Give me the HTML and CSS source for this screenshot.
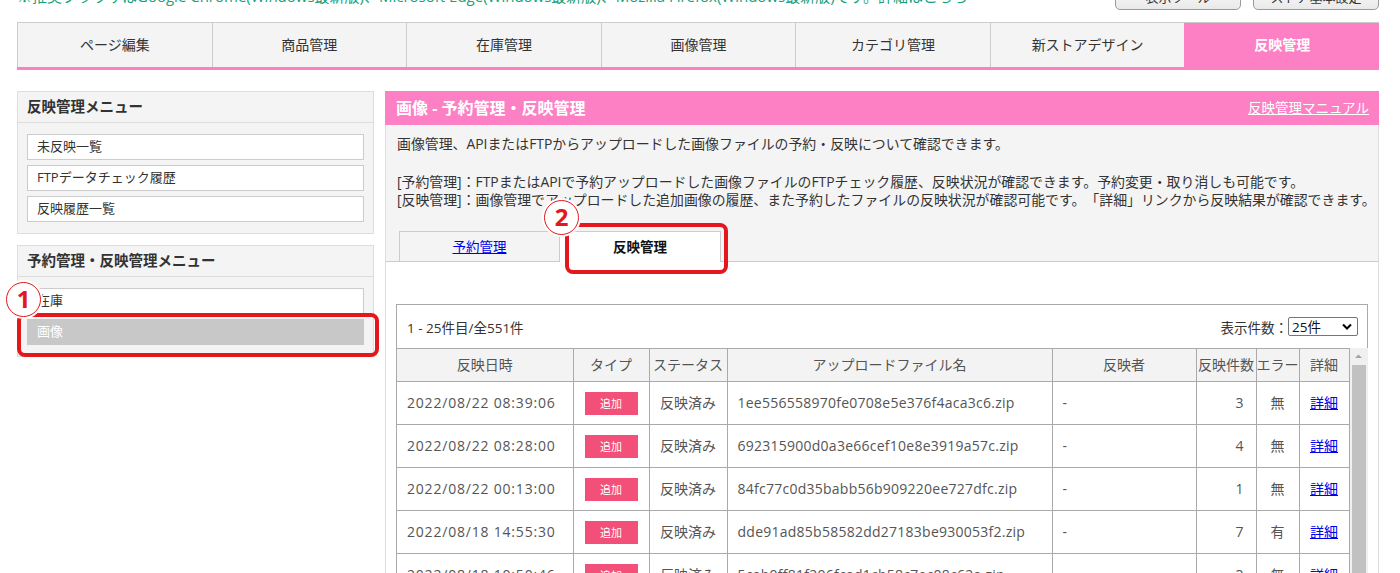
FILE: index.html
```html
<!DOCTYPE html>
<html lang="ja">
<head>
    <meta charset="UTF-8">
    <meta content="width=device-width, initial-scale=1.0" name="viewport">
    <title>画像 - 予約管理・反映管理</title>
    <link rel="stylesheet" href="styles.css">
</head>
<body>
<div class="page">
    <div class="topbar">
        <p class="notice">※推奨ブラウザはGoogle Chrome(Windows最新版)、Microsoft Edge(Windows最新版)、Mozilla Firefox(Windows最新版)です。<a href="#">詳細はこちら</a></p>
        <div class="tools">
            <button class="tool-btn">表示ツール</button>
            <button class="tool-btn">ストア基本設定</button>
        </div>
    </div>

    <nav class="gnav">
        <a class="gnav-item" href="#">ページ編集</a>
        <a class="gnav-item" href="#">商品管理</a>
        <a class="gnav-item" href="#">在庫管理</a>
        <a class="gnav-item" href="#">画像管理</a>
        <a class="gnav-item" href="#">カテゴリ管理</a>
        <a class="gnav-item" href="#">新ストアデザイン</a>
        <a class="gnav-item active" href="#">反映管理</a>
    </nav>

    <div class="layout">
        <aside class="side">
            <section class="side-box">
                <h2 class="side-title">反映管理メニュー</h2>
                <ul class="side-list">
                    <li><a href="#">未反映一覧</a></li>
                    <li><a href="#">FTPデータチェック履歴</a></li>
                    <li><a href="#">反映履歴一覧</a></li>
                </ul>
            </section>
            <section class="side-box marked">
                <h2 class="side-title">予約管理・反映管理メニュー</h2>
                <ul class="side-list">
                    <li><a href="#">在庫</a></li>
                    <li class="current"><a href="#">画像</a></li>
                </ul>
                <!-- annotation -->
                <span class="hl hl-1"></span>
                <span class="mark mark-1">1</span>
            </section>
        </aside>

        <main class="panel">
            <div class="panel-head">
                <h1>画像 - 予約管理・反映管理</h1>
                <a href="#">反映管理マニュアル</a>
            </div>
            <div class="panel-desc">
                <p class="lead">画像管理、APIまたはFTPからアップロードした画像ファイルの予約・反映について確認できます。</p>
                <p>[予約管理]：FTPまたはAPIで予約アップロードした画像ファイルのFTPチェック履歴、反映状況が確認できます。予約変更・取り消しも可能です。<br>
                    [反映管理]：画像管理でアップロードした追加画像の履歴、また予約したファイルの反映状況が確認可能です。「詳細」リンクから反映結果が確認できます。</p>
                <div class="tabs">
                    <div class="tab"><a href="#">予約管理</a></div>
                    <div class="tab active">反映管理</div>
                    <!-- annotation -->
                    <span class="hl hl-2"></span>
                    <span class="mark mark-2">2</span>
                </div>
            </div>
            <div class="panel-body">
                <div class="list-box">
                    <div class="list-meta">
                        <span>1 - 25件目/全551件</span>
                        <label class="per-page">表示件数：
                            <span class="select-wrap">
                                <select>
                                    <option>25件</option>
                                    <option>50件</option>
                                    <option>100件</option>
                                </select>
                                <svg class="select-arrow" width="10" height="7" viewBox="0 0 10 7"><path d="M1 1.5 L5 5.5 L9 1.5" fill="none" stroke="#000" stroke-width="2"/></svg>
                            </span>
                        </label>
                    </div>
                    <div class="list-scroll">
                        <table class="list">
                            <colgroup>
                                <col style="width:176px">
                                <col style="width:76px">
                                <col style="width:78px">
                                <col style="width:325px">
                                <col style="width:144px">
                                <col style="width:60px">
                                <col style="width:43px">
                                <col style="width:50px">
                            </colgroup>
                            <thead>
                            <tr>
                                <th>反映日時</th>
                                <th>タイプ</th>
                                <th>ステータス</th>
                                <th>アップロードファイル名</th>
                                <th>反映者</th>
                                <th>反映件数</th>
                                <th>エラー</th>
                                <th>詳細</th>
                            </tr>
                            </thead>
                            <tbody>
                            <tr>
                                <td class="date">2022/08/22 08:39:06</td>
                                <td class="c"><span class="badge">追加</span></td>
                                <td class="c">反映済み</td>
                                <td class="file">1ee556558970fe0708e5e376f4aca3c6.zip</td>
                                <td>-</td>
                                <td class="r">3</td>
                                <td class="c">無</td>
                                <td class="c"><a href="#">詳細</a></td>
                            </tr>
                            <tr>
                                <td class="date">2022/08/22 08:28:00</td>
                                <td class="c"><span class="badge">追加</span></td>
                                <td class="c">反映済み</td>
                                <td class="file">692315900d0a3e66cef10e8e3919a57c.zip</td>
                                <td>-</td>
                                <td class="r">4</td>
                                <td class="c">無</td>
                                <td class="c"><a href="#">詳細</a></td>
                            </tr>
                            <tr>
                                <td class="date">2022/08/22 00:13:00</td>
                                <td class="c"><span class="badge">追加</span></td>
                                <td class="c">反映済み</td>
                                <td class="file">84fc77c0d35babb56b909220ee727dfc.zip</td>
                                <td>-</td>
                                <td class="r">1</td>
                                <td class="c">無</td>
                                <td class="c"><a href="#">詳細</a></td>
                            </tr>
                            <tr>
                                <td class="date">2022/08/18 14:55:30</td>
                                <td class="c"><span class="badge">追加</span></td>
                                <td class="c">反映済み</td>
                                <td class="file">dde91ad85b58582dd27183be930053f2.zip</td>
                                <td>-</td>
                                <td class="r">7</td>
                                <td class="c">有</td>
                                <td class="c"><a href="#">詳細</a></td>
                            </tr>
                            <tr>
                                <td class="date">2022/08/18 10:50:46</td>
                                <td class="c"><span class="badge">追加</span></td>
                                <td class="c">反映済み</td>
                                <td class="file">5cab0ff81f206fcad1cb58c7ec08c62a.zip</td>
                                <td>-</td>
                                <td class="r">3</td>
                                <td class="c">無</td>
                                <td class="c"><a href="#">詳細</a></td>
                            </tr>
                            </tbody>
                        </table>
                        <div class="fake-scroll">
                            <svg class="scroll-up" width="17" height="17" viewBox="0 0 17 17"><path d="M5 10 L8.5 6.5 L12 10 Z" fill="#a3a3a3"/></svg>
                            <div class="scroll-thumb"></div>
                        </div>
                    </div>
                </div>
            </div>
        </main>
    </div>
</div>
</body>
</html>
```

FILE: styles.css
```css
body {
    margin: 0;
    font-family: "Open Sans", "Noto Sans CJK JP", sans-serif;
    color: #333;
    background: #fff;
    text-spacing-trim: space-all;
}

.page {
    width: 1362px;
    padding-left: 17px;
}

/* top strip (scrolled partly off screen) */
.topbar {
    height: 12px;
    display: flex;
    align-items: flex-end;
    justify-content: space-between;
}

.notice {
    margin: 0 0 6px;
    font-size: 15px;
    line-height: 20px;
    color: #17a07a;
    white-space: nowrap;
}

.notice a {
    color: #17a07a;
    text-decoration: none;
}

.tools {
    display: flex;
    gap: 12px;
    margin-bottom: 2px;
}

.tool-btn {
    width: 126px;
    height: 28px;
    border: 1px solid #9a9a9a;
    border-radius: 5px;
    background: linear-gradient(#fff, #e9e9e9);
    font-family: inherit;
    font-size: 13px;
    color: #333;
}

/* global nav */
.gnav {
    margin-top: 10px;
    display: grid;
    grid-template-columns: repeat(7, 1fr);
    border-top: 1px solid #ccc;
    border-bottom: 3px solid #fc80c3;
}

.gnav-item {
    height: 44px;
    padding-bottom: 2px;
    box-sizing: border-box;
    display: flex;
    align-items: center;
    justify-content: center;
    background: #f4f4f4;
    border-left: 1px solid #ccc;
    font-size: 14px;
    color: #333;
    text-decoration: none;
}

.gnav-item.active {
    background: #fc80c3;
    border-left-color: #fc80c3;
    color: #fff;
    font-weight: bold;
}

/* layout */
.layout {
    margin-top: 21px;
    display: flex;
    gap: 11px;
    align-items: flex-start;
}

.side {
    width: 357px;
    flex: 0 0 357px;
    display: flex;
    flex-direction: column;
    gap: 11px;
}

.side-box {
    position: relative;
    border: 1px solid #ddd;
    background: #f4f4f4;
}

.side-title {
    margin: 0;
    height: 31px;
    padding: 0 0 3px 9px;
    box-sizing: border-box;
    display: flex;
    align-items: center;
    border-bottom: 1px solid #ddd;
    font-size: 14.5px;
    font-weight: bold;
    color: #333;
}

.side-list {
    list-style: none;
    margin: 0;
    padding: 11px 9px 11px;
    display: flex;
    flex-direction: column;
    gap: 5px;
}

.side-list li {
    height: 24px;
    border: 1px solid #ccc;
    background: #fff;
}

.side-list a {
    display: block;
    padding-left: 9px;
    line-height: 22px;
    font-size: 13px;
    color: #333;
    text-decoration: none;
}

.side-list li.current {
    background: #c8c8c8;
    border-color: #c8c8c8;
}

.side-list li.current a {
    color: #fff;
}

/* annotations */
.hl {
    position: absolute;
    box-sizing: border-box;
    border: 4px solid #e3171c;
    border-radius: 8px;
    pointer-events: none;
}

.hl-1 {
    left: -1px;
    top: 67px;
    width: 362px;
    height: 44px;
}

.hl-2 {
    left: 166px;
    top: -8px;
    width: 163px;
    height: 51px;
}

.mark {
    position: absolute;
    box-sizing: border-box;
    width: 35px;
    height: 35px;
    border-radius: 50%;
    background: #fff;
    border: 1.5px solid #e3171c;
    box-shadow: 0 0 0 2px #fff;
    color: #e3171c;
    font-family: "Open Sans", sans-serif;
    font-size: 24px;
    font-weight: bold;
    line-height: 32px;
    text-align: center;
}

.mark-1 {
    left: -12px;
    top: 36px;
}

.mark-2 {
    left: 145px;
    top: -31px;
}

/* main panel */
.panel {
    flex: 1;
    min-width: 0;
}

.panel-head {
    height: 34px;
    padding: 0 10px 3px 11px;
    box-sizing: border-box;
    display: flex;
    align-items: center;
    justify-content: space-between;
    background: #fc80c3;
}

.panel-head h1 {
    margin: 0;
    font-size: 16px;
    font-weight: bold;
    color: #fff;
}

.panel-head a {
    font-size: 13.5px;
    color: #fff;
}

.panel-desc {
    padding: 10px 11px 0;
    background: #f4f4f4;
    border-left: 1px solid #ddd;
    border-right: 1px solid #ddd;
    border-bottom: 1px solid #ccc;
    font-size: 13.9px;
    line-height: 18px;
    color: #333;
}

.panel-desc p {
    margin: 0;
    white-space: nowrap;
}

.panel-desc .lead {
    margin-bottom: 20px;
}

.tabs {
    position: relative;
    margin: 22px 0 -1px 2px;
    display: flex;
}

.tab {
    width: 161px;
    height: 30px;
    box-sizing: border-box;
    display: flex;
    align-items: center;
    justify-content: center;
    border: 1px solid #ccc;
    border-bottom: none;
    font-size: 13.5px;
}

.tab + .tab {
    border-left: none;
}

.tab a {
    color: #00e;
}

.tab.active {
    height: 31px;
    background: #fff;
    font-weight: bold;
    color: #111;
}

.panel-body {
    padding: 42px 10px 0;
    background: #fff;
    border-left: 1px solid #ddd;
    border-right: 1px solid #ddd;
}

.list-box {
    border: 1px solid #aaa;
}

.list-meta {
    height: 43px;
    padding: 0 9px 0 10px;
    display: flex;
    align-items: center;
    justify-content: space-between;
    font-size: 13.5px;
    color: #333;
}

.per-page {
    display: flex;
    align-items: center;
}

.select-wrap {
    position: relative;
    display: inline-block;
}

.select-wrap select {
    appearance: none;
    width: 70px;
    height: 19px;
    padding: 0 0 0 3px;
    border: 1px solid #767676;
    border-radius: 2px;
    background: #fff;
    font-family: inherit;
    font-size: 13.5px;
    color: #111;
}

.select-arrow {
    position: absolute;
    right: 6px;
    top: 6px;
}

.list-scroll {
    display: flex;
}

.list {
    width: 952px;
    border-collapse: collapse;
    table-layout: fixed;
    font-size: 14px;
    color: #555;
}

.list th,
.list td {
    border: 1px solid #aaa;
    white-space: nowrap;
    overflow: hidden;
}

.list tr > :first-child {
    border-left: none;
}

.list th {
    height: 30px;
    padding: 0 0 2px;
    background: #f3f3f3;
    font-weight: normal;
    text-align: center;
}

.list td {
    height: 40px;
    padding: 0 10px 2px;
}

.list td.date {
    letter-spacing: 0.8px;
}

.list td.file {
    letter-spacing: 0.25px;
}

.list td.c {
    padding: 0 0 2px;
    text-align: center;
}

.list td.r {
    padding-right: 12px;
    text-align: right;
}

.list td a {
    color: #00e;
}

.badge {
    display: inline-block;
    width: 53px;
    height: 23px;
    line-height: 23px;
    margin-top: 2px;
    background: #f25078;
    color: #fff;
    font-size: 11px;
    vertical-align: middle;
}

.fake-scroll {
    width: 18px;
    flex: 0 0 18px;
    background: #f0f0f0;
    display: flex;
    flex-direction: column;
    align-items: center;
}

.scroll-thumb {
    flex: 1;
    width: 14px;
    background: #c1c1c1;
}
```
